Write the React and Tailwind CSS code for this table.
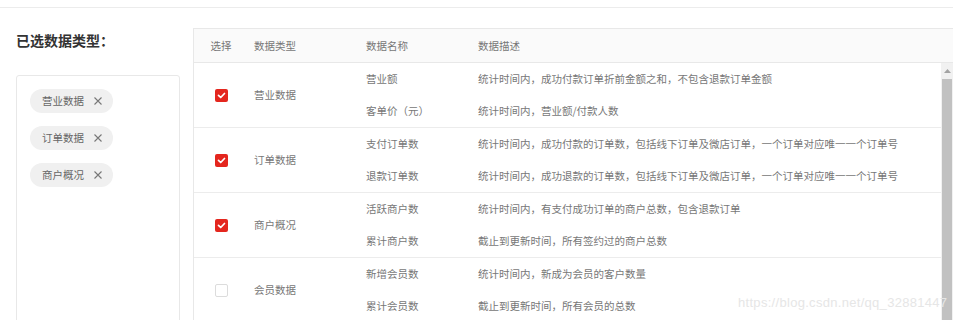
const groups = [
  {
    type: '营业数据',
    checked: true,
    items: [
      { name: '营业额', desc: '统计时间内，成功付款订单折前金额之和，不包含退款订单金额' },
      { name: '客单价（元）', desc: '统计时间内，营业额/付款人数' },
    ],
  },
  {
    type: '订单数据',
    checked: true,
    items: [
      { name: '支付订单数', desc: '统计时间内，成功付款的订单数，包括线下订单及微店订单，一个订单对应唯一一个订单号' },
      { name: '退款订单数', desc: '统计时间内，成功退款的订单数，包括线下订单及微店订单，一个订单对应唯一一个订单号' },
    ],
  },
  {
    type: '商户概况',
    checked: true,
    items: [
      { name: '活跃商户数', desc: '统计时间内，有支付成功订单的商户总数，包含退款订单' },
      { name: '累计商户数', desc: '截止到更新时间，所有签约过的商户总数' },
    ],
  },
  {
    type: '会员数据',
    checked: false,
    items: [
      { name: '新增会员数', desc: '统计时间内，新成为会员的客户数量' },
      { name: '累计会员数', desc: '截止到更新时间，所有会员的总数' },
    ],
  },
];

const tags = ['营业数据', '订单数据', '商户概况'];

const Checkbox = ({ checked }) =>
  checked ? (
    <span className="w-[13px] h-[13px] rounded-[2px] bg-[#e4261e] flex items-center justify-center">
      <svg width="9" height="9" viewBox="0 0 9 9">
        <path d="M1.5 4.4 L3.7 6.5 L7.5 2.5" fill="none" stroke="#fff" strokeWidth="1.7" strokeLinecap="round" strokeLinejoin="round" />
      </svg>
    </span>
  ) : (
    <span className="w-[13px] h-[13px] rounded-[2px] border border-[#dcdcdc] bg-white" />
  );

const App = () => {
  return (
    <div
      className="relative w-[953px] h-[320px] overflow-hidden bg-white text-[#777]"
      style={{ fontFamily: '"Noto Sans CJK SC", "Liberation Sans", sans-serif' }}
    >
      <div className="h-[7px]" />
      <div className="border-t border-[#ececec] flex">
        {/* left column */}
        <div className="pl-4 w-[180px] shrink-0">
          <h2 className="mt-[22px] h-5 leading-5 text-[14px] font-bold text-[#333]">已选数据类型：</h2>
          <div className="mt-[25px] w-[164px] h-[260px] border border-[#e8e8e8] rounded-[3px] pl-[13px] pt-[13px] flex flex-col gap-[13px]">
            {tags.map((t) => (
              <div key={t} className="w-[83px] h-6 rounded-full bg-[#f0f0f0] flex items-center pl-3 text-[10.5px] text-[#666]">
                <span>{t}</span>
                <svg className="ml-[10px]" width="8" height="8" viewBox="0 0 8 8">
                  <path d="M0.5 0.5 L7.5 7.5 M7.5 0.5 L0.5 7.5" stroke="#777" strokeWidth="1.1" />
                </svg>
              </div>
            ))}
          </div>
        </div>

        {/* table */}
        <div className="ml-[13px] mt-5 flex-1 border-l border-t border-[#e8e8e8] text-[10.5px]">
          <div className="h-[34px] bg-[#fafafa] border-b border-[#e8e8e8] flex items-center">
            <div className="w-[54px] text-center">选择</div>
            <div className="w-[112px] pl-[6px]">数据类型</div>
            <div className="w-[112px] pl-[6px]">数据名称</div>
            <div className="flex-1 pl-[6px]">数据描述</div>
          </div>
          <div className="flex">
            <div className="flex-1">
              {groups.map((g) => (
                <div key={g.type} className="h-[65px] border-b border-[#ececec] flex">
                  <div className="w-[54px] flex items-center justify-center">
                    <Checkbox checked={g.checked} />
                  </div>
                  <div className="w-[112px] pl-[6px] flex items-center">{g.type}</div>
                  <div className="flex-1 flex flex-col">
                    {g.items.map((it) => (
                      <div key={it.name} className="h-8 flex items-center">
                        <div className="w-[112px] pl-[6px]">{it.name}</div>
                        <div className="flex-1 pl-[6px] whitespace-nowrap">{it.desc}</div>
                      </div>
                    ))}
                  </div>
                </div>
              ))}
            </div>
            {/* scrollbar */}
            <div className="w-[12px] shrink-0 bg-[#f1f1f1] flex flex-col">
              <div className="h-[16px] flex items-center justify-center">
                <svg width="7" height="4" viewBox="0 0 7 4">
                  <path d="M0 4 L3.5 0 L7 4 Z" fill="#a3a3a3" />
                </svg>
              </div>
              <div className="flex-1 bg-[#c1c1c1] mx-[1px]" />
            </div>
          </div>
        </div>
      </div>

      {/* watermark */}
      <div
        className="absolute left-[738px] top-[293px] text-[13px] text-[#e6e6e6] tracking-[0.3px]"
        style={{ fontFamily: '"Liberation Sans", sans-serif' }}
      >
        https://blog.csdn.net/qq_32881447
      </div>
    </div>
  );
};

export default App;
